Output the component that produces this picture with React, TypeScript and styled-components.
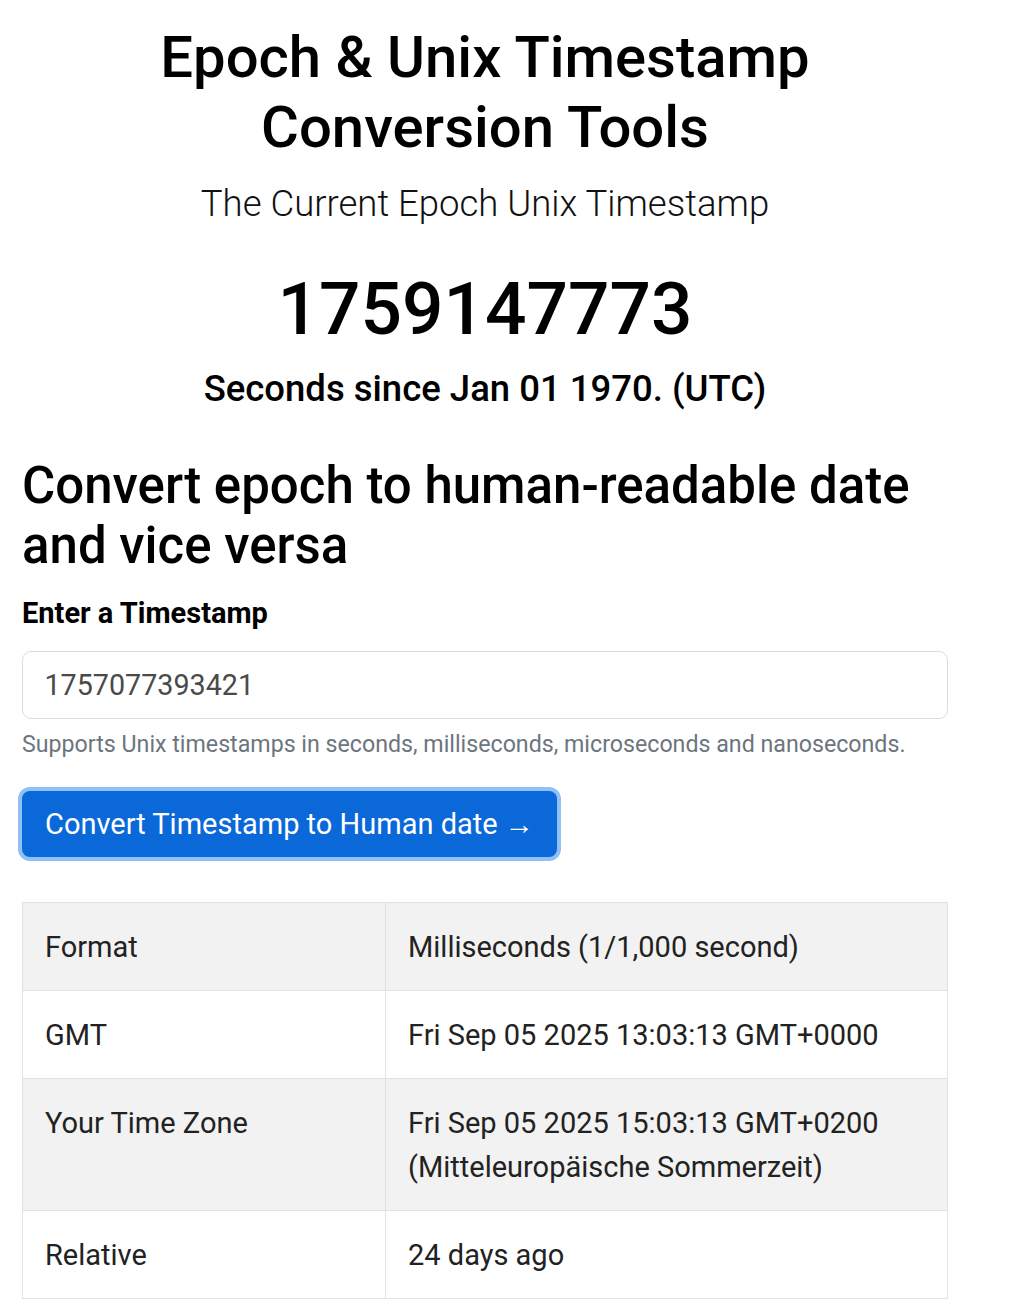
import React from "react";
import styled, { createGlobalStyle } from "styled-components";

const GlobalStyle = createGlobalStyle`
  html, body {
    margin: 0;
    padding: 0;
    background: #ffffff;
  }
  body {
    font-family: Roboto, "Liberation Sans", Arial, sans-serif;
    color: #000000;
  }
  * {
    box-sizing: border-box;
  }
`;

const Page = styled.main`
  width: 926px;
  margin-left: 22px;
  padding-top: 22px;
  display: flex;
  flex-direction: column;
`;

const Hero = styled.header`
  display: flex;
  flex-direction: column;
  align-items: center;
  text-align: center;
`;

const Title = styled.h1`
  margin: 0;
  font-size: 58px;
  line-height: 70px;
  font-weight: 500;
  color: #000;
`;

const Lead = styled.p`
  margin: 14px 0 0;
  font-size: 36.5px;
  line-height: 55px;
  font-weight: 300;
  color: #111;
`;

const BigNumber = styled.div`
  margin-top: 34px;
  font-size: 73px;
  line-height: 88px;
  font-weight: 500;
  color: #000;
`;

const Caption = styled.div`
  margin-top: 13px;
  font-size: 36.5px;
  line-height: 46px;
  font-weight: 500;
  color: #000;
`;

const SectionTitle = styled.h2`
  margin: 44px 0 0;
  font-size: 51px;
  line-height: 60px;
  font-weight: 500;
  color: #000;
`;

const Label = styled.label`
  margin-top: 17px;
  font-size: 29px;
  line-height: 41px;
  font-weight: 700;
  color: #000;
`;

const Input = styled.input`
  margin-top: 17px;
  width: 100%;
  height: 68px;
  padding: 0 21.5px;
  border: 1.5px solid #dcdcdc;
  border-radius: 9px;
  font-family: inherit;
  font-size: 28.7px;
  color: #4a4a4a;
  background: #fff;
  outline: none;
`;

const Help = styled.div`
  margin-top: 9px;
  font-size: 23.2px;
  line-height: 33px;
  color: #6c757d;
`;

const Button = styled.button`
  margin-top: 30px;
  align-self: flex-start;
  height: 66px;
  padding: 0 23px;
  border: none;
  border-radius: 8px;
  background: #0a68d9;
  color: #ffffff;
  font-family: inherit;
  font-size: 29px;
  font-weight: 400;
  box-shadow: 0 0 0 4px #8fc1f5;
  cursor: pointer;
`;

const Table = styled.table`
  margin-top: 45px;
  width: 100%;
  border-collapse: collapse;
  border: 1.5px solid #e2e2e2;
  font-size: 29px;
  line-height: 44px;
  color: #222;
`;

const Row = styled.tr<{ $striped?: boolean }>`
  background: ${(p) => (p.$striped ? "#f2f2f2" : "#ffffff")};
`;

const Cell = styled.td<{ $key?: boolean }>`
  width: ${(p) => (p.$key ? "363px" : "auto")};
  padding: 21.5px 22px;
  border: 1.5px solid #e2e2e2;
  vertical-align: top;
`;

const rows = [
  { key: "Format", value: "Milliseconds (1/1,000 second)" },
  { key: "GMT", value: "Fri Sep 05 2025 13:03:13 GMT+0000" },
  {
    key: "Your Time Zone",
    value: "Fri Sep 05 2025 15:03:13 GMT+0200 (Mitteleuropäische Sommerzeit)",
  },
  { key: "Relative", value: "24 days ago" },
];

export default function App() {
  return (
    <>
      <GlobalStyle />
      <Page>
        <Hero>
          <Title>
            Epoch &amp; Unix Timestamp
            <br />
            Conversion Tools
          </Title>
          <Lead>The Current Epoch Unix Timestamp</Lead>
          <BigNumber>1759147773</BigNumber>
          <Caption>Seconds since Jan 01 1970. (UTC)</Caption>
        </Hero>

        <SectionTitle>
          Convert epoch to human-readable date and vice versa
        </SectionTitle>
        <Label htmlFor="ts">Enter a Timestamp</Label>
        <Input id="ts" defaultValue="1757077393421" />
        <Help>
          Supports Unix timestamps in seconds, milliseconds, microseconds and
          nanoseconds.
        </Help>
        <Button>Convert Timestamp to Human date →</Button>

        <Table>
          <tbody>
            {rows.map((r, i) => (
              <Row key={r.key} $striped={i % 2 === 0}>
                <Cell $key>{r.key}</Cell>
                <Cell>{r.value}</Cell>
              </Row>
            ))}
          </tbody>
        </Table>
      </Page>
    </>
  );
}
